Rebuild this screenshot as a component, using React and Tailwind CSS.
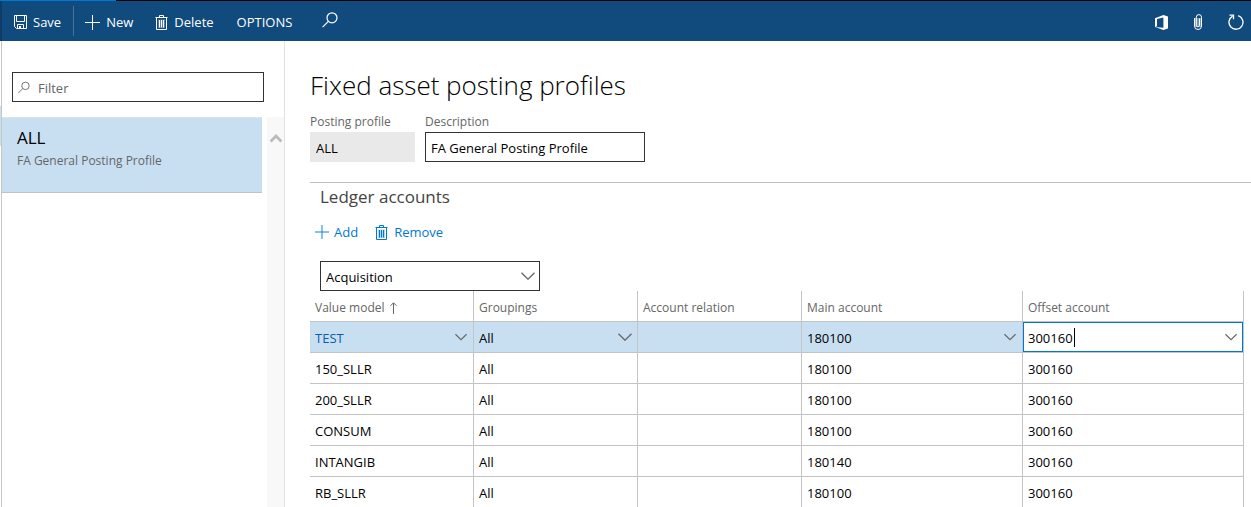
import { useState } from 'react'

const rows = [
  { id: 1, model: '150_SLLR', grouping: 'All', main: '180100', offset: '300160' },
  { id: 2, model: '200_SLLR', grouping: 'All', main: '180100', offset: '300160' },
  { id: 3, model: 'CONSUM', grouping: 'All', main: '180100', offset: '300160' },
  { id: 4, model: 'INTANGIB', grouping: 'All', main: '180140', offset: '300160' },
  { id: 5, model: 'RB_SLLR', grouping: 'All', main: '180100', offset: '300160' },
]

function SaveIcon() {
  return (
    <svg width="13" height="14" viewBox="0 0 13 14" fill="none" stroke="currentColor" aria-hidden="true">
      <path d="M.5 .5h12v13H2.5l-2-2z" />
      <path d="M2.5 .5v6h8v-6M3.5 13.5v-4h6v4" />
      <path d="M5 11h2v2.5H5z" fill="currentColor" stroke="none" />
    </svg>
  )
}

function PlusIcon({ size }) {
  return (
    <svg width={size} height={size} viewBox="0 0 15 15" fill="none" stroke="currentColor" aria-hidden="true">
      <path d="M7.5 0v15M0 7.5h15" />
    </svg>
  )
}

function TrashIcon() {
  return (
    <svg width="13" height="15" viewBox="0 0 13 15" fill="none" stroke="currentColor" aria-hidden="true">
      <path d="M3 4.5h7v8.5H3z" fill="currentColor" fillOpacity=".3" stroke="none" />
      <path d="M.5 2.5h12M4.5 2.5v-2h4v2M1.5 3v11.5h10V3" />
      <path d="M4.5 5v7.5M6.5 5v7.5M8.5 5v7.5" />
    </svg>
  )
}

function SearchIcon({ size }) {
  return (
    <svg width={size} height={size} viewBox="0 0 16 16" fill="none" stroke="currentColor" strokeWidth="1.2" aria-hidden="true">
      <circle cx="10" cy="5.8" r="5" />
      <path d="M6.4 9.4L.6 15.2" />
    </svg>
  )
}

function OfficeIcon() {
  return (
    <svg width="13" height="15" viewBox="0 0 13 15" fill="currentColor" aria-hidden="true">
      <path d="M0 3.2L8.4 0L13 1.4v12.2L8.4 15L0 12l8.4 .8V2.4L2 4v7.2L0 12z" />
    </svg>
  )
}

function ClipIcon() {
  return (
    <svg width="8" height="16" viewBox="0 0 8 16" fill="none" stroke="currentColor" aria-hidden="true">
      <path d="M1 4h6v9H1z" fill="currentColor" fillOpacity=".4" stroke="none" />
      <path d="M.5 4v8a3.5 3.5 0 0 0 7 0V3.2a2.6 2.6 0 0 0-5.2 0v8a1.6 1.6 0 0 0 3.2 0V4.5" />
    </svg>
  )
}

function RefreshIcon() {
  return (
    <svg width="16" height="16" viewBox="0 0 16 16" fill="none" stroke="currentColor" strokeWidth="1.3" aria-hidden="true">
      <path d="M10.2 1.6A7 7 0 1 1 4.6 2.1" />
      <path d="M1.5 1.2h4v4" />
    </svg>
  )
}

function Chevron({ width }) {
  return (
    <svg width={width} height="8" viewBox="0 0 14 8" fill="none" stroke="#666666" strokeWidth="1.3" aria-hidden="true">
      <path d="M.5 .8L7 7.2L13.5 .8" />
    </svg>
  )
}

function LookupCell({ label, value, onChange, className }) {
  return (
    <div className="flex h-[30px] items-center pr-[6px]">
      <input
        aria-label={label}
        value={value}
        onChange={(e) => onChange(e.target.value)}
        className={`h-full w-full min-w-0 bg-transparent px-[5px] pt-px outline-none ${className}`}
      />
      <button type="button" aria-label={`Open ${label}`} className="shrink-0">
        <Chevron width={12} />
      </button>
    </div>
  )
}

export default function App() {
  const [filter, setFilter] = useState('')
  const [description, setDescription] = useState('FA General Posting Profile')
  const [postingType, setPostingType] = useState('Acquisition')
  const [current, setCurrent] = useState({ model: 'TEST', grouping: 'All', main: '180100', offset: '300160' })

  const update = (field) => (value) => setCurrent({ ...current, [field]: value })

  return (
    <div className="flex h-screen flex-col overflow-hidden bg-white font-['Open_Sans','Noto_Sans',sans-serif] text-[13px] leading-5 text-black">
      <div className="h-px shrink-0 bg-black">
        <div className="h-px w-[116px] bg-[#0078d7]" />
      </div>

      {/* Action bar */}
      <header className="flex h-10 shrink-0 items-center justify-between border-l-2 border-[#0e3c66] bg-[#114a7d] pt-[2px] text-white">
        <div className="flex items-center">
          <button type="button" className="flex items-center gap-[6px] pl-3">
            <SaveIcon />
            Save
          </button>
          <div className="mr-[11px] ml-3 -mt-[3px] h-[30px] w-px bg-[#4a7299]" />
          <button type="button" className="flex items-center gap-[6px]">
            <PlusIcon size={15} />
            New
          </button>
          <button type="button" className="ml-[22px] flex items-center gap-[6px]">
            <TrashIcon />
            Delete
          </button>
          <button type="button" className="ml-[23px]">OPTIONS</button>
          <button type="button" aria-label="Search" className="-mt-1 ml-[30px]">
            <SearchIcon size={16} />
          </button>
        </div>
        <div className="flex items-center gap-[26px] pr-[7px]">
          <button type="button" aria-label="Office"><OfficeIcon /></button>
          <button type="button" aria-label="Attachments"><ClipIcon /></button>
          <button type="button" aria-label="Refresh"><RefreshIcon /></button>
        </div>
      </header>

      <div className="flex min-h-0 flex-1">
        <div className="w-px shrink-0 pt-[65px]">
          <div className="h-10 bg-[#c8dff2]" />
        </div>

        {/* Profile list */}
        <aside className="flex w-[284px] shrink-0 flex-col border-x border-l-[#c6c6c6] border-r-[#e1e1e1]">
          <div className="pt-[31px] pr-5 pl-[10px]">
            <label className="flex h-[30px] items-center gap-2 border border-[#333333] pl-[5px] text-[#666666]">
              <SearchIcon size={13} />
              <input
                aria-label="Filter"
                placeholder="Filter"
                value={filter}
                onChange={(e) => setFilter(e.target.value)}
                className="w-full pt-px outline-none placeholder:text-[#666666]"
              />
            </label>
          </div>
          <div className="mt-[15px] flex flex-1">
            <ul className="flex-1">
              <li className="h-[76px] border-y border-t-[#e1e1e1] border-b-[#c0c4c8] bg-[#c8dff2]">
                <a href="#all" className="block pt-2 pl-[15px]">
                  <span className="block text-[17px] leading-6">ALL</span>
                  <span className="block pt-px text-xs leading-5 text-[#666666]">FA General Posting Profile</span>
                </a>
              </li>
            </ul>
            <div className="ml-[5px] flex w-[17px] justify-center bg-[#f8f8f8] pt-4">
              <svg width="12" height="10" viewBox="0 0 12 10" fill="none" stroke="#bcbcbc" strokeWidth="3" aria-hidden="true">
                <path d="M.5 8.5L6 3L11.5 8.5" />
              </svg>
            </div>
          </div>
        </aside>

        <main className="min-w-0 flex-1 overflow-hidden pl-[25px]">
          <h1 className="pt-6 text-[26px] leading-10 font-light">Fixed asset posting profiles</h1>

          <div className="mt-[7px] flex gap-[10px]">
            <div className="w-[105px]">
              <label htmlFor="profile" className="block text-xs leading-5 text-[#666666]">Posting profile</label>
              <input id="profile" readOnly value="ALL" className="h-[30px] w-full bg-[#e9e9e9] px-[6px] pt-[2px] outline-none" />
            </div>
            <div className="w-[220px]">
              <label htmlFor="description" className="block text-xs leading-5 text-[#666666]">Description</label>
              <input
                id="description"
                value={description}
                onChange={(e) => setDescription(e.target.value)}
                className="h-[30px] w-full border border-[#333333] px-[5px] pt-[2px] outline-none"
              />
            </div>
          </div>

          {/* Ledger accounts */}
          <section className="mt-5 border-t border-[#c0c0c0]">
            <h2 className="pt-[2px] pl-[10px] text-[17px] leading-6 text-[#444444]">Ledger accounts</h2>

            <div className="mt-[13px] flex gap-[17px] pl-[5px] text-[#0078d7]">
              <button type="button" className="flex items-center gap-[5px]">
                <PlusIcon size={14} />
                Add
              </button>
              <button type="button" className="flex items-center gap-[6px]">
                <TrashIcon />
                Remove
              </button>
            </div>

            <div className="relative mt-[19px] ml-[10px] w-[220px]">
              <select
                aria-label="Posting type"
                value={postingType}
                onChange={(e) => setPostingType(e.target.value)}
                className="h-[30px] w-full appearance-none border border-[#333333] px-[5px] pt-[2px] outline-none"
              >
                <option>Acquisition</option>
                <option>Depreciation</option>
              </select>
              <span className="pointer-events-none absolute top-[11px] right-[5px]">
                <Chevron width={14} />
              </span>
            </div>

            <div className="pr-[7px]">
              <table className="w-full table-fixed border-separate border-spacing-0 text-left [&_td]:border-r [&_td]:border-b [&_td]:border-[#c4c4c4] [&_th]:border-r [&_th]:border-b [&_th]:border-[#c4c4c4] [&_th]:px-[5px] [&_th]:pt-[3px] [&_th]:text-xs [&_th]:font-normal [&_th]:text-[#666666]">
                <thead>
                  <tr className="h-[31px]">
                    <th className="w-[164px]">
                      <span className="flex items-center gap-[5px]">
                        Value model
                        <svg width="7" height="12" viewBox="0 0 7 12" fill="none" stroke="currentColor" aria-hidden="true">
                          <path d="M3.5 12V1M.5 3.8L3.5 .8L6.5 3.8" />
                        </svg>
                      </span>
                    </th>
                    <th className="w-[164px]">Groupings</th>
                    <th className="w-[164px]">Account relation</th>
                    <th>Main account</th>
                    <th>Offset account</th>
                  </tr>
                </thead>
                <tbody>
                  <tr className="h-[31px] bg-[#c8dff2]">
                    <td>
                      <LookupCell label="Value model" value={current.model} onChange={update('model')} className="text-[#0b5cab]" />
                    </td>
                    <td>
                      <div className="relative h-[30px]">
                        <select
                          aria-label="Groupings"
                          value={current.grouping}
                          onChange={(e) => update('grouping')(e.target.value)}
                          className="h-full w-full appearance-none px-[5px] pt-px outline-none"
                        >
                          <option>All</option>
                          <option>Table</option>
                          <option>Group</option>
                        </select>
                        <span className="pointer-events-none absolute top-[11px] right-[5px]">
                          <Chevron width={14} />
                        </span>
                      </div>
                    </td>
                    <td></td>
                    <td>
                      <LookupCell label="Main account" value={current.main} onChange={update('main')} className="" />
                    </td>
                    <td className="bg-white">
                      <div className="relative h-[30px] outline -outline-offset-1 outline-[#0078d7]">
                        <LookupCell label="Offset account" value={current.offset} onChange={update('offset')} className="caret-transparent" />
                        <span className="pointer-events-none absolute top-[6px] left-[51px] h-[19px] w-px bg-black" />
                      </div>
                    </td>
                  </tr>
                  {rows.map(r => (
                    <tr key={r.id} className="h-[31px] [&_td]:px-[5px] [&_td]:pt-px">
                      <td>{r.model}</td>
                      <td>{r.grouping}</td>
                      <td></td>
                      <td>{r.main}</td>
                      <td>{r.offset}</td>
                    </tr>
                  ))}
                </tbody>
              </table>
            </div>
          </section>
        </main>
      </div>
    </div>
  )
}
